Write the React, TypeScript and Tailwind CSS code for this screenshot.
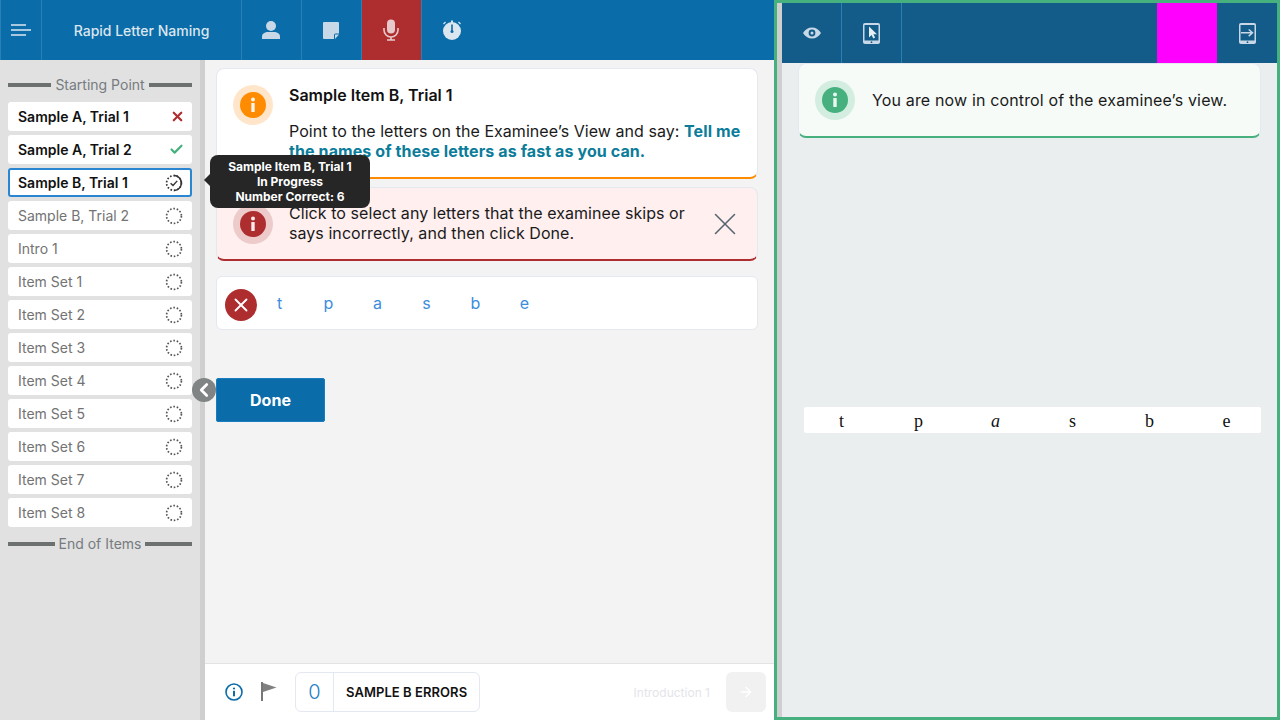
import { ChevronLeft, Check, X, ArrowRight } from 'lucide-react';

const items = [
  { label: 'Sample A, Trial 1', status: 'wrong' },
  { label: 'Sample A, Trial 2', status: 'right' },
  { label: 'Sample B, Trial 1', status: 'current' },
  { label: 'Sample B, Trial 2', status: 'todo' },
  { label: 'Intro 1', status: 'todo' },
  { label: 'Item Set 1', status: 'todo' },
  { label: 'Item Set 2', status: 'todo' },
  { label: 'Item Set 3', status: 'todo' },
  { label: 'Item Set 4', status: 'todo' },
  { label: 'Item Set 5', status: 'todo' },
  { label: 'Item Set 6', status: 'todo' },
  { label: 'Item Set 7', status: 'todo' },
  { label: 'Item Set 8', status: 'todo' },
];

const letters = ['t', 'p', 'a', 's', 'b', 'e'];

function DashedRing({ checked }: { checked?: boolean }) {
  return (
    <svg width="18" height="18" viewBox="0 0 18 18" fill="none">
      <circle cx="9" cy="9" r="7.4" stroke={checked ? '#333' : '#555'} strokeWidth="1.7" strokeDasharray="1.6 1.8" />
      {checked && <path d="M9 1.6a7.4 7.4 0 0 1 0 14.8" stroke="#333" strokeWidth="1.5" />}
      {checked && <path d="M5.6 9.2l2.4 2.3 4.2-4.6" stroke="#333" strokeWidth="1.4" />}
    </svg>
  );
}

function InfoBadge({ outer, inner, size = 40 }: { outer: string; inner: string; size?: number }) {
  return (
    <svg width={size} height={size} viewBox="0 0 40 40" className="shrink-0">
      <circle cx="20" cy="20" r="20" fill={outer} />
      <circle cx="20" cy="20" r="13" fill={inner} />
      <circle cx="20" cy="14.5" r="2" fill="#fff" opacity="0.9" />
      <rect x="18.3" y="18" width="3.4" height="9" rx="0.6" fill="#fff" opacity="0.9" />
    </svg>
  );
}

function PersonIcon() {
  return (
    <svg width="18" height="18" viewBox="0 0 18 18" fill="#c9d8e6">
      <circle cx="9" cy="5" r="5" />
      <path d="M0 18v-2.400C0 12.500 3 11 6 11h6c3 0 6 1.500 6 4.600V18z" />
    </svg>
  );
}

function NoteIcon() {
  return (
    <svg width="16" height="17" viewBox="0 0 16 17">
      <path d="M1 0h14a1 1 0 0 1 1 1v10.500h-3.500A1.500 1.500 0 0 0 11 13v4H1a1 1 0 0 1-1-1V1a1 1 0 0 1 1-1z" fill="#c9d8e6" />
      <path d="M12 12.500h4L12 17z" fill="#c9d8e6" />
    </svg>
  );
}

function MicIcon() {
  return (
    <svg width="16" height="22" viewBox="0 0 16 22" fill="none">
      <rect x="4" y="0.500" width="8" height="14" rx="4" fill="#e8c9cb" />
      <path d="M1 9v2a7 7 0 0 0 14 0V9M8 18v3M4 21h8" stroke="#e8c9cb" strokeWidth="1.600" />
    </svg>
  );
}

function TimerIcon() {
  return (
    <svg width="20" height="20" viewBox="0 0 20 20">
      <circle cx="10" cy="11" r="9" fill="#dbe6ef" />
      <rect x="9" y="0.500" width="2" height="3" fill="#dbe6ef" />
      <path d="M1.500 4l2-2M18.500 4l-2-2" stroke="#dbe6ef" strokeWidth="1.200" />
      <rect x="9.200" y="4.500" width="1.600" height="6.500" fill="#0a6ca8" />
      <circle cx="10" cy="11.500" r="1.500" fill="#0a6ca8" />
    </svg>
  );
}

function EyeIcon() {
  return (
    <svg width="18" height="12" viewBox="0 0 18 12">
      <path d="M0 6C2 2.500 5.300 0.500 9 0.500S16 2.500 18 6c-2 3.500-5.300 5.500-9 5.500S2 9.500 0 6z" fill="#c9d8e6" />
      <circle cx="9" cy="6" r="3.400" fill="#135c8a" />
      <circle cx="9" cy="6" r="1.500" fill="#c9d8e6" />
    </svg>
  );
}

function TabletIcon({ arrow }: { arrow?: boolean }) {
  return (
    <svg width="17" height="21" viewBox="0 0 17 21">
      <rect x="0" y="0" width="17" height="21" rx="2" fill="#c9d8e6" />
      <rect x="1.500" y="2" width="14" height="15.500" fill="#135c8a" />
      <circle cx="8.500" cy="19.200" r="0.900" fill="#135c8a" />
      {arrow ? (
        <path d="M2 9.800h11.500M9.700 6.500l3.800 3.300-3.800 3.300" stroke="#c9d8e6" strokeWidth="1.500" fill="none" />
      ) : (
        <path d="M6 3.500v11l2.600-2.400 1.700 3.400 1.800-.9-1.700-3.300H14z" fill="#e8eef4" />
      )}
    </svg>
  );
}

function FlagIcon() {
  return (
    <svg width="16" height="19" viewBox="0 0 16 19">
      <rect x="0" y="0" width="2" height="19" fill="#777" />
      <path d="M2 1l13.500 4.500L2 10z" fill="#808080" />
    </svg>
  );
}

function SectionLabel({ text }: { text: string }) {
  return (
    <div className="flex items-center gap-1 text-sm text-[#767b80] h-[20px]">
      <div className="h-[4px] flex-1 bg-[#6c706e]" />
      <span>{text}</span>
      <div className="h-[4px] flex-1 bg-[#6c706e]" />
    </div>
  );
}

function NavCell({ children, active }: { children: React.ReactNode; active?: boolean }) {
  return (
    <div className={`w-[60px] flex items-center justify-center pr-[1px] border-r border-[#2a80b5] ${active ? 'bg-[#ae2d2f]' : ''}`}>
      {children}
    </div>
  );
}

export default function App() {
  return (
    <div className="flex h-[720px] w-[1280px] overflow-hidden font-['Inter',sans-serif]">
      {/* examiner side */}
      <div className="relative flex w-[774px] shrink-0 flex-col bg-[#f3f3f3]">
        <header className="flex h-[60px] shrink-0 bg-[#0a6ca8] text-white">
          <div className="flex w-[42px] items-center justify-center border-x border-[#2a80b5]">
            <svg width="20" height="12" viewBox="0 0 20 12" stroke="#dbe6ef" strokeWidth="1.500">
              <path d="M0 1h15M0 6h20M0 11h15" />
            </svg>
          </div>
          <div className="flex w-[200px] items-center justify-center border-r border-[#2a80b5] pt-[1px] text-sm font-medium text-[#dbe6ef]">
            Rapid Letter Naming
          </div>
          <NavCell><PersonIcon /></NavCell>
          <NavCell><NoteIcon /></NavCell>
          <NavCell active><MicIcon /></NavCell>
          <div className="flex w-[62px] items-center justify-center pr-[2px]"><TimerIcon /></div>
        </header>

        <div className="flex min-h-0 flex-1">
          <aside className="flex w-[205px] shrink-0 flex-col border-r-[5px] border-[#cfcfcf] bg-[#e1e1e1] px-2 pt-[15px]">
            <SectionLabel text="Starting Point" />
            <div className="mt-[7px] flex flex-col gap-1">
              {items.map((item) => {
                const done = item.status === 'wrong' || item.status === 'right' || item.status === 'current';
                const current = item.status === 'current';
                return (
                  <div
                    key={item.label}
                    className={`flex h-[29px] items-center justify-between rounded-[3px] bg-white text-sm ${done ? 'font-semibold text-[#111]' : 'text-[#737373]'} ${current ? 'border-2 border-[#2a86d1] pl-2 pr-[7px]' : 'pl-[10px] pr-[9px]'}`}
                  >
                    <span>{item.label}</span>
                    {item.status === 'wrong' && <X size={15} strokeWidth={3.500} className="mr-[-2px] text-[#ae2d2f]" />}
                    {item.status === 'right' && <Check size={15} strokeWidth={3.500} className="mr-[-1px] text-[#46b07f]" />}
                    {current && <DashedRing checked />}
                    {item.status === 'todo' && <DashedRing />}
                  </div>
                );
              })}
            </div>
            <div className="mt-[7px]"><SectionLabel text="End of Items" /></div>
          </aside>

          <main className="flex min-w-0 flex-1 flex-col">
            <div className="flex-1 pl-[11px] pr-[16px] pt-2">
              <div className="flex h-[111px] gap-4 rounded-lg border border-[#e4e8f1] border-b-2 border-b-[#ff8c00] bg-white pl-4 pr-3 pt-4">
                <InfoBadge outer="#ffe5c9" inner="#ff8c00" />
                <div className="mt-[-1px]">
                  <div className="text-base font-semibold leading-[22px] text-[#111]">Sample Item B, Trial 1</div>
                  <p className="mt-[15px] text-base leading-5 tracking-[0.05px] text-[#1a1a1a]">
                    Point to the letters on the Examinee’s View and say: <strong className="font-bold tracking-[0.1px] text-[#0b7c99]">Tell me the names of these letters as fast as you can.</strong>
                  </p>
                </div>
              </div>

              <div className="mt-2 flex h-[74px] items-center gap-4 rounded-lg border border-[#e4e8f1] border-b-2 border-b-[#ae2d2f] bg-[#ffefef] pl-4 pr-[13px]">
                <InfoBadge outer="#edcbcb" inner="#ae2d2f" />
                <p className="mb-[1px] flex-1 text-base leading-5 tracking-[0.06px] text-[#1a1a1a]">
                  Click to select any letters that the examinee skips or says incorrectly, and then click Done.
                </p>
                <X size={38} strokeWidth={1} className="text-[#56656e]" />
              </div>

              <div className="mt-[15px] flex h-[54px] items-center rounded-md border border-[#e4e8f1] bg-white pl-2">
                <div className="mt-[3px] flex h-8 w-8 items-center justify-center rounded-full bg-[#ae2d2f]">
                  <X size={22} strokeWidth={2} className="text-white" />
                </div>
                <div className="ml-[-2px] flex">
                  {letters.map((l) => (
                    <span key={l} className="flex w-[49px] justify-center text-base text-[#3c8ddb]">{l}</span>
                  ))}
                </div>
              </div>

              <button className="mt-[48px] block h-[44px] w-[109px] rounded-[2px] border border-[#1a7cc0] bg-[#0a6ca8] text-base font-bold text-white">
                Done
              </button>
            </div>

            <footer className="flex h-[57px] shrink-0 items-center border-t border-[#e3e3e3] bg-white pl-5 pr-2">
              <svg width="18" height="18" viewBox="0 0 18 18" fill="none">
                <circle cx="9" cy="9" r="8" stroke="#0a6ca8" strokeWidth="1.600" />
                <circle cx="9" cy="5.500" r="1.100" fill="#0a6ca8" />
                <rect x="8" y="7.800" width="2" height="5.500" fill="#0a6ca8" />
              </svg>
              <div className="ml-[18px] mt-[-1px]"><FlagIcon /></div>
              <div className="ml-[18px] flex h-10 items-center rounded-md border border-[#e4e8f1]">
                <div className="flex h-full w-[38px] items-center justify-center border-r border-[#e4e8f1] text-xl font-light text-[#1f7fc4]">0</div>
                <div className="pl-3 pr-3 pt-[1px] text-[13px] font-semibold tracking-[0.06px] text-[#111]">SAMPLE B ERRORS</div>
              </div>
              <div className="ml-auto pt-[1px] text-xs text-[#e4e4ea]">Introduction 1</div>
              <div className="ml-4 flex h-10 w-10 items-center justify-center rounded-md bg-[#f1f1f1]">
                <ArrowRight size={16} strokeWidth={2} className="text-white" />
              </div>
            </footer>
          </main>
        </div>

        {/* collapse handle */}
        <div className="absolute left-[192px] top-[378px] flex h-6 w-6 items-center justify-center rounded-full bg-[#808484]">
          <ChevronLeft size={22} strokeWidth={3} className="mr-[1px] text-white" />
        </div>

        {/* tooltip */}
        <div className="absolute left-[204px] top-[174px] h-0 w-0 border-y-[6px] border-r-[6px] border-y-transparent border-r-[#262626]" />
        <div className="absolute left-[210px] top-[155px] flex h-[53px] w-[160px] flex-col items-center justify-center rounded-lg bg-[#262626] text-center text-xs font-bold leading-[15px] text-white">
          <div>Sample Item B, Trial 1</div>
          <div>In Progress</div>
          <div>Number Correct: 6</div>
        </div>
      </div>

      {/* examinee side */}
      <div className="flex min-w-0 flex-1 border-[3px] border-[#46b07f] bg-[#ebeeef]">
        <div className="w-[5px] shrink-0 bg-[#cfcfcf]" />
        <div className="flex min-w-0 flex-1 flex-col">
          <div className="flex h-[60px] shrink-0 bg-[#135c8a]">
            <div className="flex w-[60px] items-center justify-center border-r border-[#2a80b5]"><EyeIcon /></div>
            <div className="flex w-[60px] items-center justify-center border-r border-[#2a80b5]"><TabletIcon /></div>
            <div className="flex-1" />
            <div className="w-[60px] bg-[#ff00ff]" />
            <div className="flex w-[60px] items-center justify-center"><TabletIcon arrow /></div>
          </div>
          <div className="px-4">
            <div className="flex h-[75px] items-center gap-[17px] rounded-lg border border-[#e4e8f1] border-b-2 border-b-[#46b07f] bg-[#f6fbf8] pl-4">
              <InfoBadge outer="#d3eee1" inner="#46b07f" />
              <p className="text-base tracking-[0.15px] text-[#1a1a1a]">You are now in control of the examinee’s view.</p>
            </div>
          </div>
          <div className="ml-[22px] mr-4 mt-[269px] grid h-[26px] grid-cols-[repeat(6,77px)] items-center overflow-hidden rounded-[2px] bg-white font-['Liberation_Serif',serif] text-lg text-[#111]">
            {letters.map((l) => (
              <span key={l} className={`pr-[2px] text-center ${l === 'a' ? 'italic' : ''}`}>{l}</span>
            ))}
          </div>
        </div>
      </div>
    </div>
  );
}
